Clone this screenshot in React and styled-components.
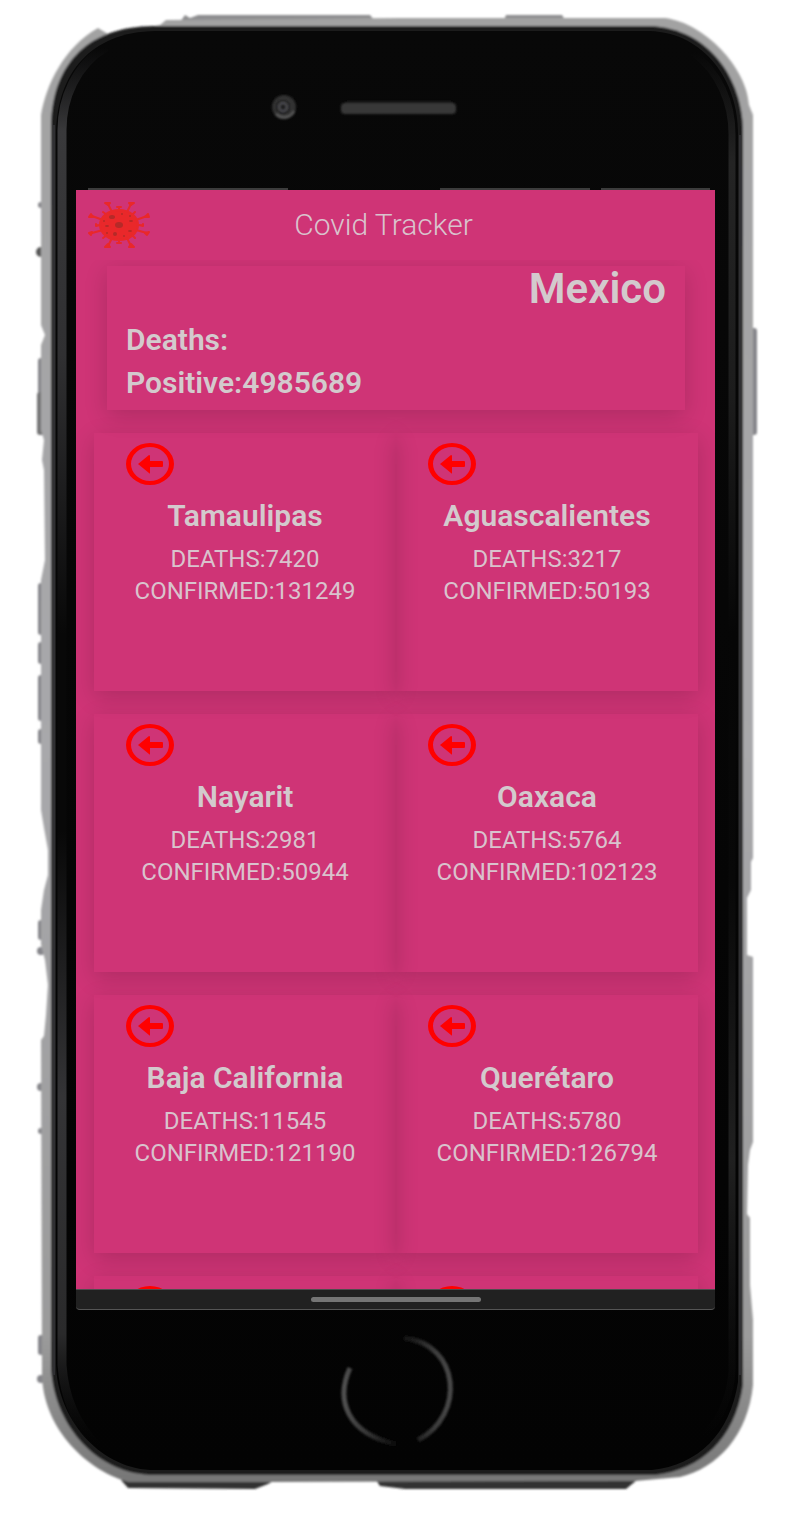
import React from "react";
import styled, { createGlobalStyle } from "styled-components";

const colors = {
  screen: "#cf3476",
  heading: "#d3cacd",
  text: "#d9c3cd",
  alert: "#ff0000",
  virus: "#e9282a",
  virusSpot: "#b52a28",
};

const GlobalStyle = createGlobalStyle`
  *, *::before, *::after { box-sizing: border-box; }
  body {
    margin: 0;
    background: #ffffff;
    font-family: Roboto, "Liberation Sans", sans-serif;
  }
  h1, h2, h3, p, ul { margin: 0; padding: 0; }
`;

const Phone = styled.div`
  position: relative;
  display: grid;
  grid-template-columns: 76fr 639fr 79fr;
  grid-template-rows: 190px minmax(0, 1fr) 212px;
  height: 100vh;
  min-height: 960px;
`;

const PhoneBody = styled.svg`
  position: absolute;
  inset: 0;
  width: 100%;
  height: 100%;
`;

const Screen = styled.div`
  position: relative;
  grid-column: 2;
  grid-row: 2;
  display: flex;
  flex-direction: column;
  min-width: 0;
  background: ${colors.screen};
  overflow: hidden;
`;

const AppBar = styled.header`
  display: grid;
  grid-template-columns: 64px 1fr 88px;
  align-items: center;
  height: 70px;
  flex: none;
  padding: 0 12px;
`;

const VirusIcon = styled.svg`
  width: 64px;
  height: 48px;
`;

const AppTitle = styled.h1`
  color: ${colors.text};
  font-size: 30px;
  font-weight: 300;
  line-height: 36px;
  text-align: center;
`;

const Content = styled.main`
  flex: 1;
  min-height: 0;
  overflow: hidden;
  padding: 6px 17px 0 18px;
`;

const Surface = styled.article`
  box-shadow: 0 6px 22px rgba(0, 0, 0, 0.16);
`;

const CountryCard = styled(Surface)`
  height: 144px;
  margin: 0 13px 23px;
  padding: 0 19px;
`;

const CountryName = styled.h2`
  color: ${colors.heading};
  font-size: 42px;
  font-weight: 600;
  line-height: 46px;
  text-align: right;
`;

const CountryStat = styled.p`
  color: ${colors.heading};
  font-size: 30px;
  font-weight: 600;
  line-height: 43px;
  padding-top: ${(p) => (p.$first ? 6 : 0)}px;
`;

const StateGrid = styled.ul`
  display: grid;
  grid-template-columns: repeat(2, minmax(0, 1fr));
  row-gap: 23px;
  list-style: none;
`;

const StateItem = styled.li`
  min-width: 0;
`;

const StateCard = styled(Surface)`
  height: 258px;
  padding: 10px 8px 0;
  text-align: center;
`;

const ArrowButton = styled.button`
  display: block;
  width: 48px;
  height: 42px;
  margin: 0 24px 13px;
  padding: 0;
  border: 0;
  background: none;
  cursor: pointer;

  svg {
    display: block;
    width: 100%;
    height: 100%;
  }
`;

const StateName = styled.h3`
  color: ${colors.heading};
  font-size: 30px;
  font-weight: 600;
  line-height: 36px;
  margin-bottom: 9px;
`;

const StateStat = styled.p`
  color: ${colors.text};
  font-size: 24px;
  line-height: 32px;
`;

const NavBar = styled.div`
  display: flex;
  align-items: center;
  justify-content: center;
  flex: none;
  height: 21px;
  background: #212121;
  border-top: 1px solid #4d4d4d;
  border-bottom: 1px solid #555555;
  border-radius: 0 0 4px 4px;
`;

const NavHandle = styled.span`
  width: 170px;
  height: 5px;
  border-radius: 3px;
  background: #757575;
`;

const ScreenFoot = styled.div`
  flex: none;
  background: #050505;
`;

const LowerBezel = styled.div`
  position: relative;
  grid-column: 1 / -1;
  grid-row: 3;
  display: flex;
  justify-content: center;
  padding-top: 25px;
`;

const HomeButton = styled.button`
  width: 114px;
  height: 114px;
  padding: 0;
  border: 0;
  border-radius: 50%;
  background: transparent;
  cursor: pointer;
`;

const states = [
  { name: "Tamaulipas", deaths: 7420, confirmed: 131249 },
  { name: "Aguascalientes", deaths: 3217, confirmed: 50193 },
  { name: "Nayarit", deaths: 2981, confirmed: 50944 },
  { name: "Oaxaca", deaths: 5764, confirmed: 102123 },
  { name: "Baja California", deaths: 11545, confirmed: 121190 },
  { name: "Querétaro", deaths: 5780, confirmed: 126794 },
];

function PhoneFrame() {
  return (
    <PhoneBody viewBox="0 0 794 1522" preserveAspectRatio="none" aria-hidden="true">
      <defs>
        <linearGradient id="metal" x1="0" y1="0" x2="0" y2="1">
          <stop offset="0" stopColor="#a2a2a2" />
          <stop offset="0.5" stopColor="#a8a8ab" />
          <stop offset="0.9" stopColor="#9b9b9b" />
          <stop offset="1" stopColor="#777777" />
        </linearGradient>
        <linearGradient id="stripLeft" x1="0" y1="0" x2="0" y2="1">
          <stop offset="0" stopColor="#303032" stopOpacity="0" />
          <stop offset="0.06" stopColor="#39393b" />
          <stop offset="0.22" stopColor="#303032" />
          <stop offset="0.42" stopColor="#080808" />
          <stop offset="0.56" stopColor="#080808" />
          <stop offset="0.75" stopColor="#343436" />
          <stop offset="0.92" stopColor="#2a2a2b" />
          <stop offset="1" stopColor="#111111" stopOpacity="0" />
        </linearGradient>
        <linearGradient id="stripRight" x1="0" y1="0" x2="0" y2="1">
          <stop offset="0" stopColor="#222222" stopOpacity="0" />
          <stop offset="0.08" stopColor="#242424" />
          <stop offset="0.25" stopColor="#1c1c1c" />
          <stop offset="0.42" stopColor="#060606" />
          <stop offset="0.6" stopColor="#080808" />
          <stop offset="0.8" stopColor="#202020" />
          <stop offset="1" stopColor="#151515" stopOpacity="0" />
        </linearGradient>
        <linearGradient id="face" x1="0" y1="0" x2="0" y2="1">
          <stop offset="0" stopColor="#080808" />
          <stop offset="1" stopColor="#030303" />
        </linearGradient>
        <linearGradient id="ring" x1="0" y1="0" x2="1" y2="0">
          <stop offset="0" stopColor="#505050" />
          <stop offset="0.2" stopColor="#383838" />
          <stop offset="0.45" stopColor="#101010" />
          <stop offset="0.6" stopColor="#141414" />
          <stop offset="0.85" stopColor="#3c3c3c" />
          <stop offset="1" stopColor="#484848" />
        </linearGradient>
        <filter id="soft" x="-5%" y="-5%" width="110%" height="110%">
          <feGaussianBlur stdDeviation="1.1" />
        </filter>
      </defs>

      <g filter="url(#soft)">
        <g fill="#85858a">
          <rect x="38" y="358" width="8" height="36" rx="3" />
          <rect x="37" y="392" width="8" height="43" rx="3" fill="#747476" />
          <rect x="38" y="583" width="8" height="52" rx="3" />
          <rect x="38" y="642" width="8" height="22" rx="3" />
          <rect x="38" y="675" width="8" height="46" rx="3" />
          <rect x="38" y="729" width="8" height="15" rx="3" />
          <rect x="38" y="920" width="8" height="20" rx="3" />
          <circle cx="41" cy="205" r="3" />
          <circle cx="41" cy="252" r="5" fill="#555555" />
          <circle cx="41" cy="951" r="4" />
          <circle cx="41" cy="1087" r="4" />
          <circle cx="41" cy="1131" r="3" />
          <rect x="38" y="1335" width="6" height="20" rx="3" />
          <circle cx="41" cy="1379" r="4" />
          <rect x="742" y="328" width="15" height="107" rx="3" />
        </g>
        <path
          fill="#8d8d8f"
          d="M180 22 L185 15 L190 18 L198 15 L370 15 L374 20 Z M504 20 L506 15 L562 15 L565 20 Z"
        />
        <path
          fill="#333333"
          d="M121 1480 L128 1488 L255 1489 L268 1484 L275 1480 Z M376 1480 L380 1486 L405 1489 L626 1489 L637 1480 Z"
        />
        <path
          fill="url(#metal)"
          d="M160 25 L166 20 L400 18 L480 18 L665 18 C705 23 747 68 749 105 L753 115
             L753 858 L751 862 L751 890 L747 898 L747 955 L753 957 L753 1142 L750 1150 L748 1165
             L747 1214 L750 1218 L750 1285 L753 1320 L753 1385 C748 1435 718 1468 680 1477
             L635 1481 L270 1482 L128 1482 C82 1468 43 1425 42 1375
             L41 1040 L44 1036 L46 1015 L48 985 L45 960 L41 945 L41 910 L44 890 L48 875 L48 850
             L44 828 L41 810 L41 580 L45 560 L44 470 L42 460 L44 440 L41 430 L41 345 L45 335 L41 325
             L41 115 C46 85 64 47 98 28 L108 34 Z"
        />
        <path
          fill="#1c1c1d"
          d="M51 125 C52 70 82 26 155 26 L650 26 C708 28 743 78 743 132
             L743 1385 C735 1440 700 1470 655 1475 L150 1475 C92 1472 52 1420 51 1365 Z"
        />
      </g>
      <path
        fill="url(#face)"
        d="M56 130 C58 74 90 32 155 31 L650 31 C704 33 738 80 738 134
           L738 1382 C730 1434 698 1465 652 1470 L150 1470 C98 1467 57 1418 56 1364 Z"
      />
      <path
        d="M106 47 C76 65 62 98 62 130 L62 1365 C64 1395 75 1425 98 1446"
        fill="none"
        stroke="url(#stripLeft)"
        strokeWidth="9"
      />
      <path
        d="M692 52 C720 72 732 104 732 134 L732 1370 C731 1396 720 1420 704 1436"
        fill="none"
        stroke="url(#stripRight)"
        strokeWidth="7"
      />
      <path d="M54 125 V1375 M740 135 V1375" stroke="#303033" strokeWidth="2" />

      <g filter="url(#soft)">
        <circle cx="284" cy="107" r="12" fill="#303030" />
        <path d="M276 114 A11 11 0 0 0 294 111" fill="none" stroke="#555555" strokeWidth="3" />
        <circle cx="283" cy="107" r="7" fill="#202020" />
        <circle cx="283" cy="107" r="4" fill="none" stroke="#505054" strokeWidth="2" />
        <rect x="341" y="103" width="115" height="11" rx="4" fill="#383838" />
        <path d="M346 102 H452" stroke="#151515" strokeWidth="2" />
        <path
          d="M350 1368 C335 1401 348 1434 396 1444 M418 1440 C466 1415 460 1344 404 1338"
          fill="none"
          stroke="url(#ring)"
          strokeWidth="5"
        />
      </g>
      <path d="M88 189 H288 M440 189 H590 M601 189 H710" stroke="#3c3c3c" strokeWidth="2" />
    </PhoneBody>
  );
}

function Virus() {
  return (
    <VirusIcon viewBox="0 0 64 48" role="img" aria-label="Coronavirus">
      <g stroke={colors.virus} strokeWidth="2" fill={colors.virus} strokeLinecap="round" strokeLinejoin="round">
        <path d="M20 3 L25 13 M43 3 L38 13 M20 45 L25 35 M43 45 L38 35" />
        <path d="M4 15 L15 19 M59 15 L48 19 M4 32 L15 29 M59 32 L48 29" />
        <path d="M17 2 L22 2 L20 4 Z M41 2 L46 2 L43 4 Z M17 46 L22 46 L20 43 Z M41 46 L46 46 L43 43 Z" />
        <path d="M1 16 L3 13 L5 16 Z M57 16 L60 13 L61 16 Z M1 32 L4 31 L3 34 Z M57 32 L61 31 L59 34 Z" />
        <path d="M31 6 V10 M29 6 H33 M31 38 V42 M29 42 H33 M8 23 V25 L12 24 M55 23 V25 L51 24" />
        <path d="M15 11 L19 14 M47 11 L44 14 M15 37 L19 34 M47 37 L44 34" />
        <ellipse cx="31" cy="24" rx="19" ry="15" />
      </g>
      <g fill={colors.virusSpot}>
        <ellipse cx="31" cy="24" rx="4" ry="3" />
        <ellipse cx="24" cy="16" rx="3" ry="2" />
        <ellipse cx="27" cy="33" rx="2" ry="2" />
        <ellipse cx="43" cy="20" rx="2" ry="1" />
        <ellipse cx="42" cy="30" rx="2" ry="1" />
        <ellipse cx="19" cy="25" rx="2" ry="1" />
        <circle cx="16" cy="20" r="1" />
        <circle cx="19" cy="32" r="1" />
        <circle cx="34" cy="13" r="1" />
        <circle cx="42" cy="15" r="1" />
        <circle cx="36" cy="35" r="1" />
      </g>
    </VirusIcon>
  );
}

function ArrowIcon() {
  return (
    <svg viewBox="0 0 48 42" aria-hidden="true">
      <path
        fillRule="evenodd"
        fill={colors.alert}
        d="M0 21 A24 21 0 1 1 48 21 A24 21 0 1 1 0 21 Z M5 21 A19 17 0 1 0 43 21 A19 17 0 1 0 5 21 Z"
      />
      <path
        d="M12 21 L23 12 Q24 12 24 13 V18 H36 Q37 18 37 19 V23 Q37 24 36 24 H24 V30 Q24 31 23 30 Z"
        fill={colors.alert}
      />
    </svg>
  );
}

export default function App() {
  return (
    <>
      <GlobalStyle />
      <Phone>
        <PhoneFrame />
        <Screen>
          <AppBar>
            <Virus />
            <AppTitle>Covid Tracker</AppTitle>
          </AppBar>
          <Content>
            <CountryCard>
              <CountryName>Mexico</CountryName>
              <CountryStat $first>Deaths:</CountryStat>
              <CountryStat>Positive:4985689</CountryStat>
            </CountryCard>
            <StateGrid>
              {states.map((s) => (
                <StateItem key={s.name}>
                  <StateCard>
                    <ArrowButton type="button" aria-label={`Open ${s.name}`}>
                      <ArrowIcon />
                    </ArrowButton>
                    <StateName>{s.name}</StateName>
                    <StateStat>DEATHS:{s.deaths}</StateStat>
                    <StateStat>CONFIRMED:{s.confirmed}</StateStat>
                  </StateCard>
                </StateItem>
              ))}
              {["next-left", "next-right"].map((id) => (
                <StateItem key={id}>
                  <StateCard>
                    <ArrowButton type="button" aria-label="Open next state">
                      <ArrowIcon />
                    </ArrowButton>
                  </StateCard>
                </StateItem>
              ))}
            </StateGrid>
          </Content>
          <ScreenFoot>
            <NavBar>
              <NavHandle />
            </NavBar>
          </ScreenFoot>
        </Screen>
        <LowerBezel>
          <HomeButton type="button" aria-label="Home" />
        </LowerBezel>
      </Phone>
    </>
  );
}
